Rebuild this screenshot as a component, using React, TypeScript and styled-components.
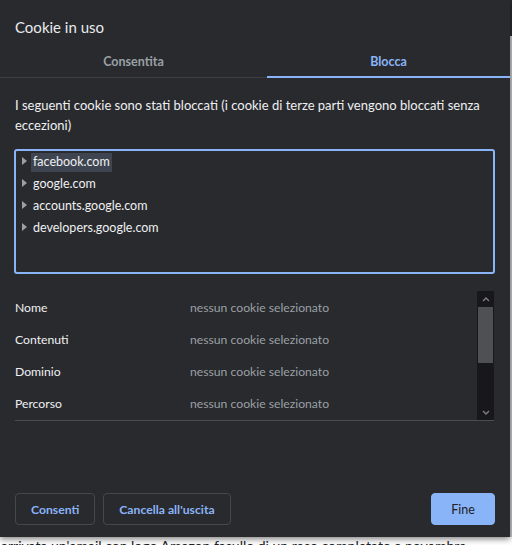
import React from 'react';
import styled, { createGlobalStyle } from 'styled-components';

const GlobalStyle = createGlobalStyle`
  html, body {
    margin: 0;
    padding: 0;
    background: #ffffff;
  }
  body {
    font-family: Lato, 'Noto Sans', sans-serif;
    -webkit-font-smoothing: antialiased;
  }
`;

const Page = styled.div`
  width: 512px;
  height: 545px;
  overflow: hidden;
  background: #ffffff;
`;

const Top = styled.div`
  display: flex;
`;

const Dialog = styled.div`
  width: 510px;
  height: 537px;
  background: #292a2d;
  display: flex;
  flex-direction: column;
  box-shadow: 0 2px 6px rgba(0, 0, 0, 0.5);
  position: relative;
  z-index: 1;
`;

const EdgeStrip = styled.div`
  width: 2px;
  height: 537px;
  background: linear-gradient(#292a2d 0, #292a2d 36px, #c9c9c9 36px);
`;

const Title = styled.h1`
  margin: 0;
  padding: 16px 15px 0;
  font-size: 15px;
  line-height: 22px;
  font-weight: 400;
  color: #e8eaed;
`;

const TabBar = styled.div`
  display: flex;
  margin-top: 8px;
  border-bottom: 1px solid #3c4043;
`;

const Tab = styled.div<{ $active?: boolean; $width?: number }>`
  flex: ${({ $width }) => ($width ? `0 0 ${$width}px` : '1')};
  height: 30px;
  display: flex;
  align-items: center;
  justify-content: center;
  font-size: 12.5px;
  font-weight: 700;
  color: ${({ $active }) => ($active ? '#8ab4f8' : '#9aa0a6')};
  border-bottom: 2px solid ${({ $active }) => ($active ? '#8ab4f8' : 'transparent')};
  margin-bottom: -1px;
`;

const Description = styled.p`
  margin: 17px 15px 0;
  font-size: 13px;
  line-height: 20px;
  color: #eef0f2;
`;

const TreeBox = styled.div`
  margin: 14px 15px 0 14px;
  height: 121px;
  border: 2px solid #8ab4f8;
  border-radius: 3px;
`;

const TreeRow = styled.div`
  height: 22px;
  display: flex;
  align-items: center;
  padding-left: 6px;
`;

const Arrow = styled.span`
  width: 0;
  height: 0;
  border-top: 4px solid transparent;
  border-bottom: 4px solid transparent;
  border-left: 5px solid #9aa0a6;
  margin-right: 4px;
  margin-top: -2px;
`;

const TreeLabel = styled.span<{ $selected?: boolean }>`
  font-size: 12.5px;
  line-height: 18px;
  padding: 0 2px 1px;
  color: #eef0f2;
  background: ${({ $selected }) => ($selected ? '#3f4550' : 'transparent')};
`;

const Details = styled.div`
  margin: 17px 16px 0 15px;
  display: flex;
  border-bottom: 1px solid #4a4c50;
`;

const DetailRows = styled.div`
  flex: 1;
`;

const DetailRow = styled.div`
  height: 32px;
  display: flex;
  align-items: center;
  font-size: 12.2px;
`;

const DetailLabel = styled.span`
  width: 175px;
  color: #eef0f2;
`;

const DetailValue = styled.span`
  color: #9aa0a6;
`;

const Scrollbar = styled.div`
  width: 17px;
  height: 129px;
  background: #18181a;
  display: flex;
  flex-direction: column;
  align-items: center;
`;

const ScrollArrow = styled.div`
  height: 16px;
  display: flex;
  align-items: center;
  justify-content: center;
`;

const ScrollThumb = styled.div`
  width: 15px;
  height: 56px;
  background: #4f5052;
`;

const ScrollTrack = styled.div`
  flex: 1;
`;

const Footer = styled.div`
  margin-top: auto;
  padding: 0 15px 12px;
  display: flex;
  gap: 8px;
`;

const Button = styled.button<{ $primary?: boolean }>`
  height: 32px;
  padding: 0 15px;
  border-radius: 4px;
  font-family: inherit;
  font-size: 12.2px;
  font-weight: 700;
  border: 1px solid ${({ $primary }) => ($primary ? '#8ab4f8' : '#45474b')};
  background: ${({ $primary }) => ($primary ? '#8ab4f8' : 'transparent')};
  color: ${({ $primary }) => ($primary ? '#202124' : '#8ab4f8')};
  cursor: pointer;
`;

const FineButton = styled(Button)`
  margin-left: auto;
  width: 64px;
  font-weight: 400;
  font-size: 12.5px;
`;

const PageText = styled.p`
  margin: -1px 0 0;
  padding-left: 1px;
  font-size: 14px;
  line-height: 20px;
  color: #202124;
  white-space: nowrap;
`;

const Chevron = ({ up }: { up?: boolean }) => (
  <svg width="8" height="5" viewBox="0 0 8 5">
    <path
      d={up ? 'M1 4 L4 1 L7 4' : 'M1 1 L4 4 L7 1'}
      fill="none"
      stroke="#7c7f84"
      strokeWidth="1.4"
    />
  </svg>
);

const domains = ['facebook.com', 'google.com', 'accounts.google.com', 'developers.google.com'];
const fields = ['Nome', 'Contenuti', 'Dominio', 'Percorso'];

export default function App() {
  return (
    <Page>
      <GlobalStyle />
      <Top>
        <Dialog>
          <Title>Cookie in uso</Title>
          <TabBar>
            <Tab $width={267}>Consentita</Tab>
            <Tab $active>Blocca</Tab>
          </TabBar>
          <Description>
            I seguenti cookie sono stati bloccati (i cookie di terze parti vengono bloccati senza
            eccezioni)
          </Description>
          <TreeBox>
            {domains.map((d, i) => (
              <TreeRow key={d}>
                <Arrow />
                <TreeLabel $selected={i === 0}>{d}</TreeLabel>
              </TreeRow>
            ))}
          </TreeBox>
          <Details>
            <DetailRows>
              {fields.map((f) => (
                <DetailRow key={f}>
                  <DetailLabel>{f}</DetailLabel>
                  <DetailValue>nessun cookie selezionato</DetailValue>
                </DetailRow>
              ))}
            </DetailRows>
            <Scrollbar>
              <ScrollArrow>
                <Chevron up />
              </ScrollArrow>
              <ScrollThumb />
              <ScrollTrack />
              <ScrollArrow>
                <Chevron />
              </ScrollArrow>
            </Scrollbar>
          </Details>
          <Footer>
            <Button>Consenti</Button>
            <Button>Cancella all'uscita</Button>
            <FineButton $primary>Fine</FineButton>
          </Footer>
        </Dialog>
        <EdgeStrip />
      </Top>
      <PageText>arrivata un'email con logo Amazon fasullo di un reso completato a novembre</PageText>
    </Page>
  );
}
